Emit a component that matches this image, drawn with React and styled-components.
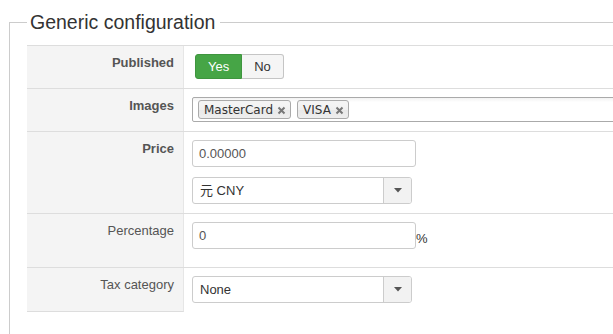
import React from "react";
import styled, { createGlobalStyle } from "styled-components";

const GlobalStyle = createGlobalStyle`
  html, body {
    margin: 0;
    overflow: hidden;
    background: #fff;
  }
  body {
    font-family: "Liberation Sans", Arial, "Noto Sans CJK SC", sans-serif;
    font-size: 13px;
    color: #333;
  }
`;

const Page = styled.div`
  padding: 7px 0 0 9px;
`;

const Fieldset = styled.fieldset`
  width: 720px;
  min-width: 0;
  margin: 0;
  padding: 7px 0 40px 17px;
  border: 1px solid #ccc;
`;

const Legend = styled.legend`
  padding: 0 5px 0 3px;
  font-size: 19.5px;
  line-height: 31px;
  color: #333;
`;

const Table = styled.div`
  width: 640px;
`;

const Row = styled.div`
  display: grid;
  grid-template-columns: 157px 1fr;
  border-top: 1px solid #ddd;
`;

const Label = styled.div`
  background: #f4f4f4;
  border-right: 1px solid #e6e6e6;
  border-bottom: ${(p) => (p.$last ? "1px solid #ddd" : "none")};
  padding: 7px 9px 0 8px;
  text-align: right;
  line-height: 20px;
  color: #555;
  font-weight: ${(p) => (p.$required ? "bold" : "normal")};
`;

const Value = styled.div`
  padding: 8px 8px 9px;
  display: flex;
  flex-direction: column;
  align-items: flex-start;
  gap: 10px;
`;

const BtnGroup = styled.div`
  display: flex;
  margin-left: 3px;
`;

const Toggle = styled.button`
  height: 25px;
  padding: 0 12px;
  font: inherit;
  font-size: 13px;
  line-height: 23px;
  border: 1px solid ${(p) => (p.$active ? "#3f953f" : "#c5c5c5")};
  background: ${(p) => (p.$active ? "#46a546" : "#f5f5f5")};
  color: ${(p) => (p.$active ? "#fff" : "#333")};
  border-radius: ${(p) => (p.$first ? "3px 0 0 3px" : "0 3px 3px 0")};
  border-left-width: ${(p) => (p.$first ? "1px" : "0")};
`;

const Choices = styled.div`
  width: 440px;
  height: 25px;
  box-sizing: border-box;
  padding: 2px 5px;
  border: 1px solid #aaa;
  border-radius: 2px;
  background: linear-gradient(#f2f2f2 0%, #fff 18%);
  display: flex;
  gap: 6px;
`;

const Tag = styled.span`
  height: 19px;
  box-sizing: border-box;
  padding: 0 3px 0 5px;
  display: flex;
  align-items: center;
  gap: 4px;
  border: 1px solid #aaa;
  border-radius: 3px;
  background: linear-gradient(#f4f4f4 20%, #f0f0f0 50%, #e8e8e8 52%, #eee 100%);
  font-family: "DejaVu Sans", Verdana, sans-serif;
  font-size: 12px;
  color: #333;
`;

const Input = styled.div`
  width: 224px;
  height: 27px;
  box-sizing: border-box;
  padding: 0 6px;
  border: 1px solid #ccc;
  border-radius: 3px;
  background: #fff;
  line-height: 25px;
  color: #555;
`;

const InputLine = styled.div`
  display: flex;
  align-items: center;
  margin-bottom: 9px;
`;

const Unit = styled.span`
  padding-top: 5px;
  color: #333;
`;

const Select = styled.div`
  width: 220px;
  height: 27px;
  box-sizing: border-box;
  display: flex;
  border: 1px solid #ccc;
  border-radius: 3px;
  background: #fff;
  overflow: hidden;
`;

const SelectText = styled.span`
  flex: 1;
  padding-left: 7px;
  line-height: 25px;
  color: #333;
`;

const SelectButton = styled.span`
  width: 27px;
  border-left: 1px solid #ccc;
  background: #f2f2f2;
  display: flex;
  align-items: center;
  justify-content: center;
`;

const Close = () => (
  <svg width="10" height="10" viewBox="0 0 10 10">
    <path d="M1.5 2.5l6 6M7.5 2.5l-6 6" stroke="#777" strokeWidth="2" />
  </svg>
);

const Caret = () => (
  <svg width="8" height="5" viewBox="0 0 8 5">
    <path d="M0 0h8L4 4.5z" fill="#555" />
  </svg>
);

const DropSelect = ({ children }) => (
  <Select>
    <SelectText>{children}</SelectText>
    <SelectButton>
      <Caret />
    </SelectButton>
  </Select>
);

export default function App() {
  return (
    <Page>
      <GlobalStyle />
      <Fieldset>
        <Legend>Generic configuration</Legend>
        <Table>
          <Row>
            <Label $required>Published</Label>
            <Value>
              <BtnGroup>
                <Toggle $active $first>
                  Yes
                </Toggle>
                <Toggle>No</Toggle>
              </BtnGroup>
            </Value>
          </Row>
          <Row>
            <Label $required>Images</Label>
            <Value>
              <Choices>
                <Tag>
                  MasterCard
                  <Close />
                </Tag>
                <Tag>
                  VISA
                  <Close />
                </Tag>
              </Choices>
            </Value>
          </Row>
          <Row>
            <Label $required>Price</Label>
            <Value>
              <Input>0.00000</Input>
              <DropSelect>元 CNY</DropSelect>
            </Value>
          </Row>
          <Row>
            <Label>Percentage</Label>
            <Value>
              <InputLine>
                <Input>0</Input>
                <Unit>%</Unit>
              </InputLine>
            </Value>
          </Row>
          <Row>
            <Label $last>Tax category</Label>
            <Value>
              <DropSelect>None</DropSelect>
            </Value>
          </Row>
        </Table>
      </Fieldset>
    </Page>
  );
}
